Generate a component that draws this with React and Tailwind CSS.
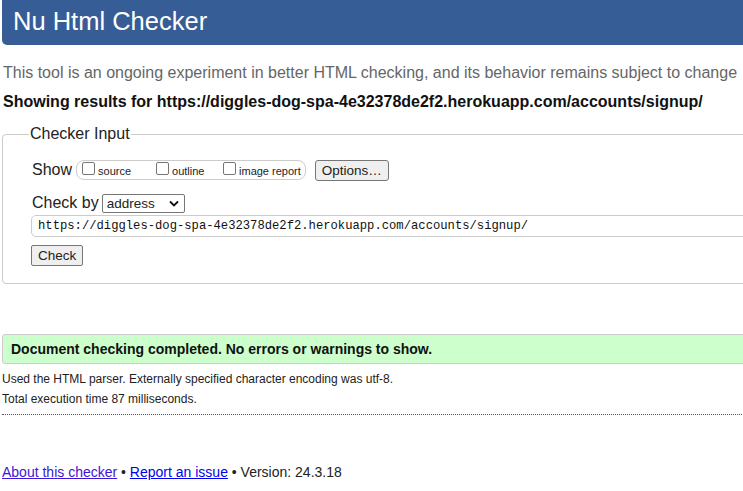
import React from "react";

const url = "https://diggles-dog-spa-4e32378de2f2.herokuapp.com/accounts/signup/";

const Check = ({ label, width }) => (
  <span className={`flex items-center ${width}`}>
    <span className="w-[13px] h-[13px] border border-[#767676] rounded-[2px] bg-white mr-[3px] mt-[-3px]" />
    <span className="text-[11px] mt-[3px]">{label}</span>
  </span>
);

const App = () => {
  return (
    <div className="w-[743px] h-[491px] overflow-hidden bg-white text-[#222] font-['Liberation_Sans',Arial,sans-serif]">
      <div className="w-[790px] pl-[2px]">
        <h1 className="h-[45px] bg-[#365d95] rounded-bl-[5px] text-white text-[25.5px] leading-[43px] pl-[11px]">
          Nu Html Checker
        </h1>

        <p className="mt-[18px] text-[16px] leading-[20px] text-[#666] pl-[1px]">
          This tool is an ongoing experiment in better HTML checking, and its behavior remains subject to change
        </p>
        <p className="mt-[9px] text-[16px] leading-[20px] font-bold text-[#111] pl-[1px]">
          Showing results for {url}
        </p>

        <fieldset className="mt-[13px] border border-[#ccc] rounded-[4px] pl-[29px] pr-0 pb-[16px]">
          <legend className="px-[1px] ml-[-3px] text-[16px] leading-[18px] text-[#222]">Checker Input</legend>

          <div className="flex items-center mt-[16px] h-[22px]">
            <span className="text-[16px] mr-[4px]">Show</span>
            <div className="flex items-center h-[20px] border border-[#ccc] rounded-[8px] pl-[5px] pr-[4px]">
              <Check label="source" width="w-[74px]" />
              <Check label="outline" width="w-[67px]" />
              <Check label="image report" width="" />
            </div>
            <button className="ml-[9px] h-[21px] px-[6px] border border-[#767676] rounded-[3px] bg-[#efefef] text-[13.5px] leading-[19px]">
              Options…
            </button>
          </div>

          <div className="flex items-center mt-[12px] h-[20px]">
            <span className="text-[16px] mr-[3px]">Check by</span>
            <div className="flex items-center justify-between w-[83px] h-[19px] border border-[#767676] rounded-[2px] bg-white pl-[4px] pr-[5px]">
              <span className="text-[13.5px] leading-[17px]">address</span>
              <svg width="10" height="7" viewBox="0 0 10 7">
                <path d="M1 1.5 L5 5.5 L9 1.5" fill="none" stroke="#111" strokeWidth="1.8" />
              </svg>
            </div>
          </div>

          <div className="mt-[2px] h-[22px] border border-[#ccc] rounded-l-[5px] ml-[-1px] pl-[6px] flex items-center">
            <span className="font-['Liberation_Mono',monospace] text-[12.2px] text-[#111]">{url}</span>
          </div>

          <button className="mt-[8px] ml-[-1px] h-[21px] px-[6px] border border-[#767676] rounded-[2px] bg-[#efefef] text-[13.5px] leading-[19px]">
            Check
          </button>
        </fieldset>

        <div className="mt-[50px] h-[30px] bg-[#ccffcc] border border-[#ccc] rounded-l-[3px] pl-[8px] flex items-center">
          <span className="font-bold text-[14px] text-[#111]">
            Document checking completed. No errors or warnings to show.
          </span>
        </div>

        <p className="mt-[5px] text-[12px] leading-[20px] text-[#222]">
          Used the HTML parser. Externally specified character encoding was utf-8.
        </p>
        <p className="text-[12px] leading-[20px] text-[#222]">Total execution time 87 milliseconds.</p>

        <div className="mt-[5px] border-t border-dotted border-[#555]" />

        <p className="mt-[48px] text-[14px] leading-[18px] text-[#222]">
          <a href="#" className="underline text-[#3b16d6]">About this checker</a>
          {" • "}
          <a href="#" className="underline text-[#0000ee]">Report an issue</a>
          {" • Version: 24.3.18"}
        </p>
      </div>
    </div>
  );
};

export default App;
